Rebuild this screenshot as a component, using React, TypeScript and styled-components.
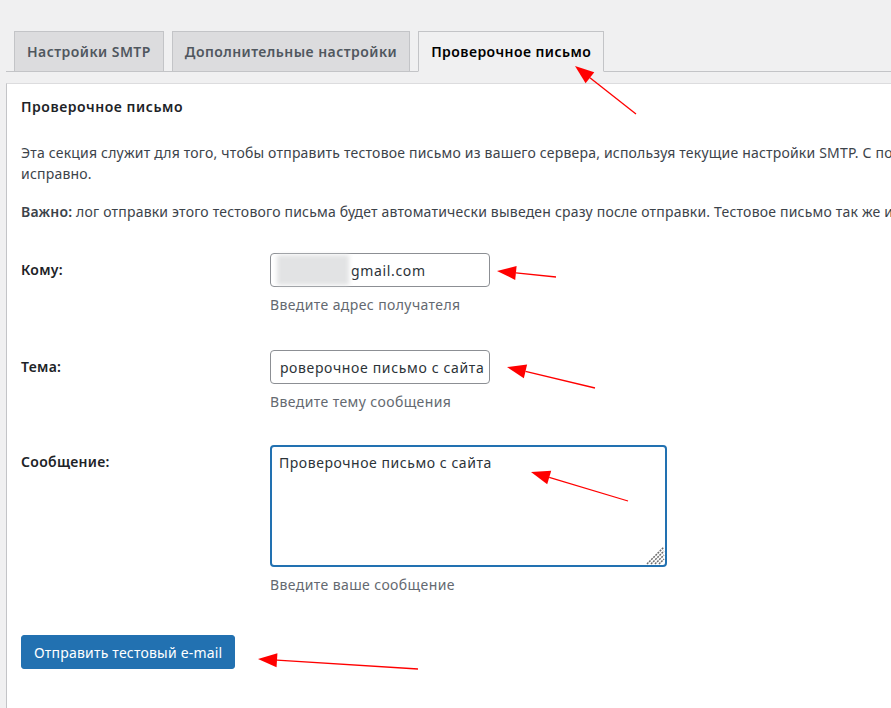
import React, { useEffect, useRef } from "react";
import styled, { createGlobalStyle } from "styled-components";

const GlobalStyle = createGlobalStyle`
  html, body {
    margin: 0;
    padding: 0;
    background: #f0f0f1;
    overflow: hidden;
  }
  body {
    font-family: "Noto Sans", "Open Sans", sans-serif;
    font-size: 14px;
    color: #1d2327;
  }
`;

const Page = styled.div`
  position: relative;
  width: 891px;
  height: 708px;
  overflow: hidden;
  padding: 31px 0 0 6px;
  box-sizing: border-box;
`;

const TabBar = styled.nav`
  display: flex;
  border-bottom: 1px solid #c3c4c7;
  width: 1200px;
  padding-left: 8px;
`;

const Tab = styled.a<{ $active?: boolean }>`
  display: block;
  margin-right: 8px;
  margin-bottom: -1px;
  padding: 0 12px;
  height: 39px;
  line-height: 39px;
  font-size: 14px;
  font-weight: 600;
  letter-spacing: 0.45px;
  white-space: nowrap;
  text-decoration: none;
  border: 1px solid #c3c4c7;
  border-bottom-color: ${(p) => (p.$active ? "#f0f0f1" : "#c3c4c7")};
  background: ${(p) => (p.$active ? "#f0f0f1" : "#dcdcde")};
  color: ${(p) => (p.$active ? "#000" : "#50575e")};
`;

const Panel = styled.section`
  margin-top: 11px;
  width: 1200px;
  background: #fff;
  border-top: 1px solid #dcdcde;
  border-left: 1px solid #c3c4c7;
  padding: 12px 0 40px 14px;
  min-height: 640px;
`;

const Title = styled.h3`
  margin: 0 0 24px;
  font-size: 14px;
  font-weight: 600;
  letter-spacing: 0.55px;
  line-height: 22px;
  color: #1d2327;
`;

const Text = styled.p`
  margin: 0 0 17px;
  line-height: 21px;
  letter-spacing: 0.2px;
  white-space: nowrap;
  color: #3c434a;

  b {
    font-weight: 600;
  }
`;

const Form = styled.div`
  display: flex;
  flex-direction: column;
  margin-top: 31px;
`;

const Row = styled.div<{ $gap: number }>`
  display: grid;
  grid-template-columns: 249px 1fr;
  margin-bottom: ${(p) => p.$gap}px;
`;

const Label = styled.label`
  padding-top: 8px;
  font-weight: 600;
  letter-spacing: 0.3px;
  line-height: 18px;
  color: #1d2327;
`;

const Field = styled.div`
  display: flex;
  flex-direction: column;
  align-items: flex-start;
`;

const InputBox = styled.div`
  position: relative;
`;

const Input = styled.input<{ $indent?: number }>`
  box-sizing: border-box;
  width: 220px;
  height: 34px;
  padding: 0 5px 0 8px;
  text-indent: ${(p) => p.$indent ?? 0}px;
  font-family: inherit;
  font-size: 14px;
  letter-spacing: 0.65px;
  color: #2c3338;
  border: 1px solid #8c8f94;
  border-radius: 4px;
  background: #fff;
  outline: none;
`;

const Redact = styled.span`
  position: absolute;
  left: 7px;
  top: 2px;
  width: 72px;
  height: 30px;
  background: #e2e3e4;
  filter: blur(2px);
`;

const Area = styled.textarea`
  display: block;
  box-sizing: border-box;
  width: 397px;
  height: 122px;
  padding: 5px 7px;
  font-family: inherit;
  font-size: 14px;
  letter-spacing: 0.55px;
  line-height: 22px;
  color: #2c3338;
  border: 2px solid #2271b1;
  border-radius: 4px;
  outline: none;
  resize: none;
`;

const Grip = styled.svg`
  position: absolute;
  right: 2px;
  bottom: 2px;
  pointer-events: none;
`;

const Hint = styled.span`
  margin-top: 8px;
  line-height: 20px;
  letter-spacing: 0.4px;
  color: #646970;
`;

const Button = styled.button`
  align-self: flex-start;
  height: 34px;
  padding: 0 12px;
  font-family: inherit;
  font-size: 14px;
  letter-spacing: 0.2px;
  color: #fff;
  background: #2271b1;
  border: 1px solid #2271b1;
  border-radius: 3px;
`;

const Overlay = styled.svg`
  position: absolute;
  left: 0;
  top: 0;
  pointer-events: none;
`;

const arrows = [
  { tip: [575, 66], tail: [636, 114] },
  { tip: [497, 271], tail: [556, 277] },
  { tip: [507, 367], tail: [595, 388] },
  { tip: [531, 472], tail: [628, 501] },
  { tip: [258, 659], tail: [418, 669] },
];

const Arrow = ({ tip, tail }: { tip: number[]; tail: number[] }) => {
  const dx = tail[0] - tip[0];
  const dy = tail[1] - tip[1];
  const len = Math.hypot(dx, dy);
  const ux = dx / len;
  const uy = dy / len;
  const bx = tip[0] + ux * 19;
  const by = tip[1] + uy * 19;
  const w = 7;
  const pts = `${tip[0]},${tip[1]} ${bx - uy * w},${by + ux * w} ${bx + uy * w},${by - ux * w}`;
  return (
    <g>
      <line x1={bx} y1={by} x2={tail[0]} y2={tail[1]} stroke="#ff0000" strokeWidth={1.3} />
      <polygon points={pts} fill="#ff0000" />
    </g>
  );
};

export default function App() {
  const subjectRef = useRef<HTMLInputElement>(null);

  useEffect(() => {
    const el = subjectRef.current;
    if (el) el.scrollLeft = el.scrollWidth;
  }, []);

  return (
    <Page>
      <GlobalStyle />
      <TabBar>
        <Tab>Настройки SMTP</Tab>
        <Tab>Дополнительные настройки</Tab>
        <Tab $active>Проверочное письмо</Tab>
      </TabBar>
      <Panel>
        <Title>Проверочное письмо</Title>
        <Text>
          Эта секция служит для того, чтобы отправить тестовое письмо из вашего сервера, используя текущие
          настройки SMTP. С помощью этой проверки вы можете убедиться, что всё работает
          <br />
          исправно.
        </Text>
        <Text>
          <b>Важно:</b> лог отправки этого тестового письма будет автоматически выведен сразу после
          отправки. Тестовое письмо так же и отправится на указанный адрес.
        </Text>
        <Form>
          <Row $gap={35}>
            <Label>Кому:</Label>
            <Field>
              <InputBox>
                <Input defaultValue="gmail.com" $indent={72} />
                <Redact />
              </InputBox>
              <Hint>Введите адрес получателя</Hint>
            </Field>
          </Row>
          <Row $gap={33}>
            <Label>Тема:</Label>
            <Field>
              <Input ref={subjectRef} defaultValue="Проверочное письмо с сайта" />
              <Hint>Введите тему сообщения</Hint>
            </Field>
          </Row>
          <Row $gap={40}>
            <Label>Сообщение:</Label>
            <Field>
              <InputBox>
                <Area defaultValue="Проверочное письмо с сайта" />
                <Grip width={20} height={20} viewBox="0 0 20 20">
                  {[5, 9, 13, 17].map((d) => (
                    <line
                      key={d}
                      x1={19 - d}
                      y1={19}
                      x2={19}
                      y2={19 - d}
                      stroke="#6e6e6e"
                      strokeWidth={1.5}
                      strokeDasharray="2 1"
                    />
                  ))}
                </Grip>
              </InputBox>
              <Hint>Введите ваше сообщение</Hint>
            </Field>
          </Row>
          <Button>Отправить тестовый e-mail</Button>
        </Form>
      </Panel>
      <Overlay width={891} height={708} viewBox="0 0 891 708">
        {arrows.map((a, i) => (
          <Arrow key={i} tip={a.tip} tail={a.tail} />
        ))}
      </Overlay>
    </Page>
  );
}
